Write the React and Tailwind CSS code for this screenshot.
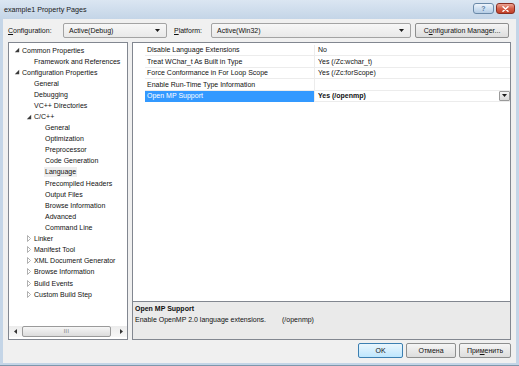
import React from "react";

const tree = [
  [0, "open", "Common Properties"],
  [1, null, "Framework and References"],
  [0, "open", "Configuration Properties"],
  [1, null, "General"],
  [1, null, "Debugging"],
  [1, null, "VC++ Directories"],
  [1, "open", "C/C++"],
  [2, null, "General"],
  [2, null, "Optimization"],
  [2, null, "Preprocessor"],
  [2, null, "Code Generation"],
  [2, null, "Language", true],
  [2, null, "Precompiled Headers"],
  [2, null, "Output Files"],
  [2, null, "Browse Information"],
  [2, null, "Advanced"],
  [2, null, "Command Line"],
  [1, "closed", "Linker"],
  [1, "closed", "Manifest Tool"],
  [1, "closed", "XML Document Generator"],
  [1, "closed", "Browse Information"],
  [1, "closed", "Build Events"],
  [1, "closed", "Custom Build Step"],
];

const levelPad = ["pl-[5px]", "pl-[17px]", "pl-[28px]"];

const rows = [
  ["Disable Language Extensions", "No"],
  ["Treat WChar_t As Built in Type", "Yes (/Zc:wchar_t)"],
  ["Force Conformance in For Loop Scope", "Yes (/Zc:forScope)"],
  ["Enable Run-Time Type Information", ""],
  ["Open MP Support", "Yes (/openmp)", true],
];

function Arrow({ state }) {
  if (state === "open")
    return (
      <svg width="6" height="6" viewBox="0 0 6 6">
        <polygon points="5.2,0.8 5.2,5.2 0.8,5.2" fill="#3a3a3a" />
      </svg>
    );
  if (state === "closed")
    return (
      <svg width="6" height="7" viewBox="0 0 6 7">
        <polygon points="1.5,0.5 4.5,3.5 1.5,6.5" fill="none" stroke="#a8a8a8" strokeWidth="0.9" />
      </svg>
    );
  return null;
}

function DownTri() {
  return (
    <svg width="5" height="3" viewBox="0 0 5 3">
      <polygon points="0,0 5,0 2.5,3" fill="#1a1a1a" />
    </svg>
  );
}

function Combo({ w, text }) {
  return (
    <div
      className={`${w} h-[15px] border border-[#a3a3a3] rounded-[2px] bg-gradient-to-b from-[#f7f7f7] to-[#e9e9e9] flex items-center pl-[5px] pr-[6px] justify-between`}
    >
      <span>{text}</span>
      <DownTri />
    </div>
  );
}

export default function App() {
  return (
    <div className="w-[519px] h-[366px] bg-[#c4d5e7] flex flex-col font-['Liberation_Sans',Arial,sans-serif] text-[7px] text-[#111] leading-none overflow-hidden border-b border-[#7d97ab]">
      {/* title bar */}
      <div className="h-[19px] shrink-0 flex items-start justify-between pl-[4px] pr-[4px] bg-gradient-to-b from-[#dbe6f2] to-[#c4d5e7]">
        <span className="mt-[6px] text-[7.2px] text-[#1a1a1a]">example1 Property Pages</span>
        <div className="flex gap-[2px] mt-[3px]">
          <div className="w-[21px] h-[11px] rounded-[3px] border border-[#6a89a8] bg-gradient-to-b from-[#eef4fb] via-[#cfe0f1] to-[#b6cde5] flex items-center justify-center">
            <span className="text-[7px] font-bold text-[#5d82a8]">?</span>
          </div>
          <div className="w-[19px] h-[11px] rounded-[3px] border border-[#8a2e22] bg-gradient-to-b from-[#eba596] via-[#d5604a] to-[#c13f27] flex items-center justify-center">
            <svg width="7" height="6" viewBox="0 0 7 6">
              <path d="M1 0.8 L6 5.2 M6 0.8 L1 5.2" stroke="#fff" strokeWidth="1.5" strokeLinecap="round" />
            </svg>
          </div>
        </div>
      </div>

      {/* body */}
      <div className="flex-1 mx-[3px] mb-[2px] bg-[#f0f0f0] flex flex-col pl-[5px] pr-[5px] pt-[4px]">
        {/* config row */}
        <div className="flex items-center h-[15px]">
          <span className="w-[55px]">
            <span className="underline">C</span>onfiguration:
          </span>
          <Combo w="w-[104px]" text="Active(Debug)" />
          <span className="w-[37px] ml-[7px]">
            <span className="underline">P</span>latform:
          </span>
          <Combo w="w-[200px]" text="Active(Win32)" />
          <div className="ml-[4px] w-[94px] h-[15px] border border-[#8e8f8f] rounded-[2px] bg-gradient-to-b from-[#f5f5f5] to-[#dddddd] flex items-center justify-center">
            C<span className="underline">o</span>nfiguration Manager...
          </div>
        </div>

        {/* main */}
        <div className="flex mt-[4px] h-[298px]">
          {/* tree */}
          <div className="w-[120px] h-full border border-[#828790] bg-white flex flex-col">
            <div className="flex-1 pt-[1.5px]">
              {tree.map(([lvl, st, label, sel], i) => (
                <div key={i} className={`h-[11.1px] flex items-center ${levelPad[lvl]}`}>
                  <span className="w-[6px] h-[7px] mr-[2px] flex items-center justify-center">
                    <Arrow state={st} />
                  </span>
                  <span className={sel ? "bg-[#eeeeee] px-[1px] -ml-[1px] leading-[10px]" : ""}>{label}</span>
                </div>
              ))}
            </div>
            <div className="h-[11px] mb-[2px] flex items-stretch bg-gradient-to-b from-[#ececec] to-[#f7f7f7]">
              <div className="w-[12px] flex items-center justify-center">
                <svg width="3" height="5" viewBox="0 0 3 5">
                  <polygon points="3,0 3,5 0,2.5" fill="#333" />
                </svg>
              </div>
              <div className="w-[89px] ml-[1px] border border-[#9a9a9a] rounded-[2px] bg-gradient-to-b from-[#f6f6f6] to-[#dcdcdc] flex items-center justify-center">
                <span className="text-[5px] text-[#666] tracking-[0.5px]">III</span>
              </div>
              <div className="flex-1" />
              <div className="w-[12px] flex items-center justify-center">
                <svg width="3" height="5" viewBox="0 0 3 5">
                  <polygon points="0,0 0,5 3,2.5" fill="#333" />
                </svg>
              </div>
            </div>
          </div>

          {/* right */}
          <div className="ml-[4px] flex-1 flex flex-col">
            <div className="h-[260px] border border-[#828790] bg-white pt-[1.5px]">
              {rows.map(([name, val, sel], i) => (
                <div key={i} className="flex h-[11.5px]">
                  <div className="w-[12px]" />
                  <div
                    className={`w-[169px] pl-[2px] flex items-center border-b ${
                      sel ? "bg-[#3399ff] text-white border-[#3399ff]" : "border-[#ececec]"
                    }`}
                  >
                    {name}
                  </div>
                  <div className="flex-1 flex items-center justify-between pl-[3px] border-l border-b border-[#ececec]">
                    <span className={sel ? "font-bold" : ""}>{val}</span>
                    {sel && (
                      <div className="w-[11px] h-[10px] border border-[#9a9a9a] rounded-[1px] bg-gradient-to-b from-[#f4f4f4] to-[#d9d9d9] flex items-center justify-center">
                        <DownTri />
                      </div>
                    )}
                  </div>
                </div>
              ))}
            </div>
            <div className="h-[38px] border-x border-b border-[#828790] bg-[#eaeaea] pl-[2px] pt-[1px]">
              <div className="h-[11px] flex items-center font-bold">Open MP Support</div>
              <div className="h-[11px] flex items-center">
                <span>Enable OpenMP 2.0 language extensions.</span>
                <span className="ml-[16px]">(/openmp)</span>
              </div>
            </div>
          </div>
        </div>

        {/* bottom buttons */}
        <div className="flex justify-end gap-[3px] mt-[3px]">
          <div className="w-[45px] h-[15px] border border-[#3c7fb1] rounded-[2px] bg-gradient-to-b from-[#eaf6fd] to-[#bee6fd] flex items-center justify-center">
            OK
          </div>
          <div className="w-[50px] h-[15px] border border-[#8e8f8f] rounded-[2px] bg-gradient-to-b from-[#f5f5f5] to-[#dddddd] flex items-center justify-center">
            Отмена
          </div>
          <div className="w-[52px] h-[15px] border border-[#8e8f8f] rounded-[2px] bg-gradient-to-b from-[#f5f5f5] to-[#dddddd] flex items-center justify-center">
            При<span className="underline">м</span>енить
          </div>
        </div>
      </div>
    </div>
  );
}
